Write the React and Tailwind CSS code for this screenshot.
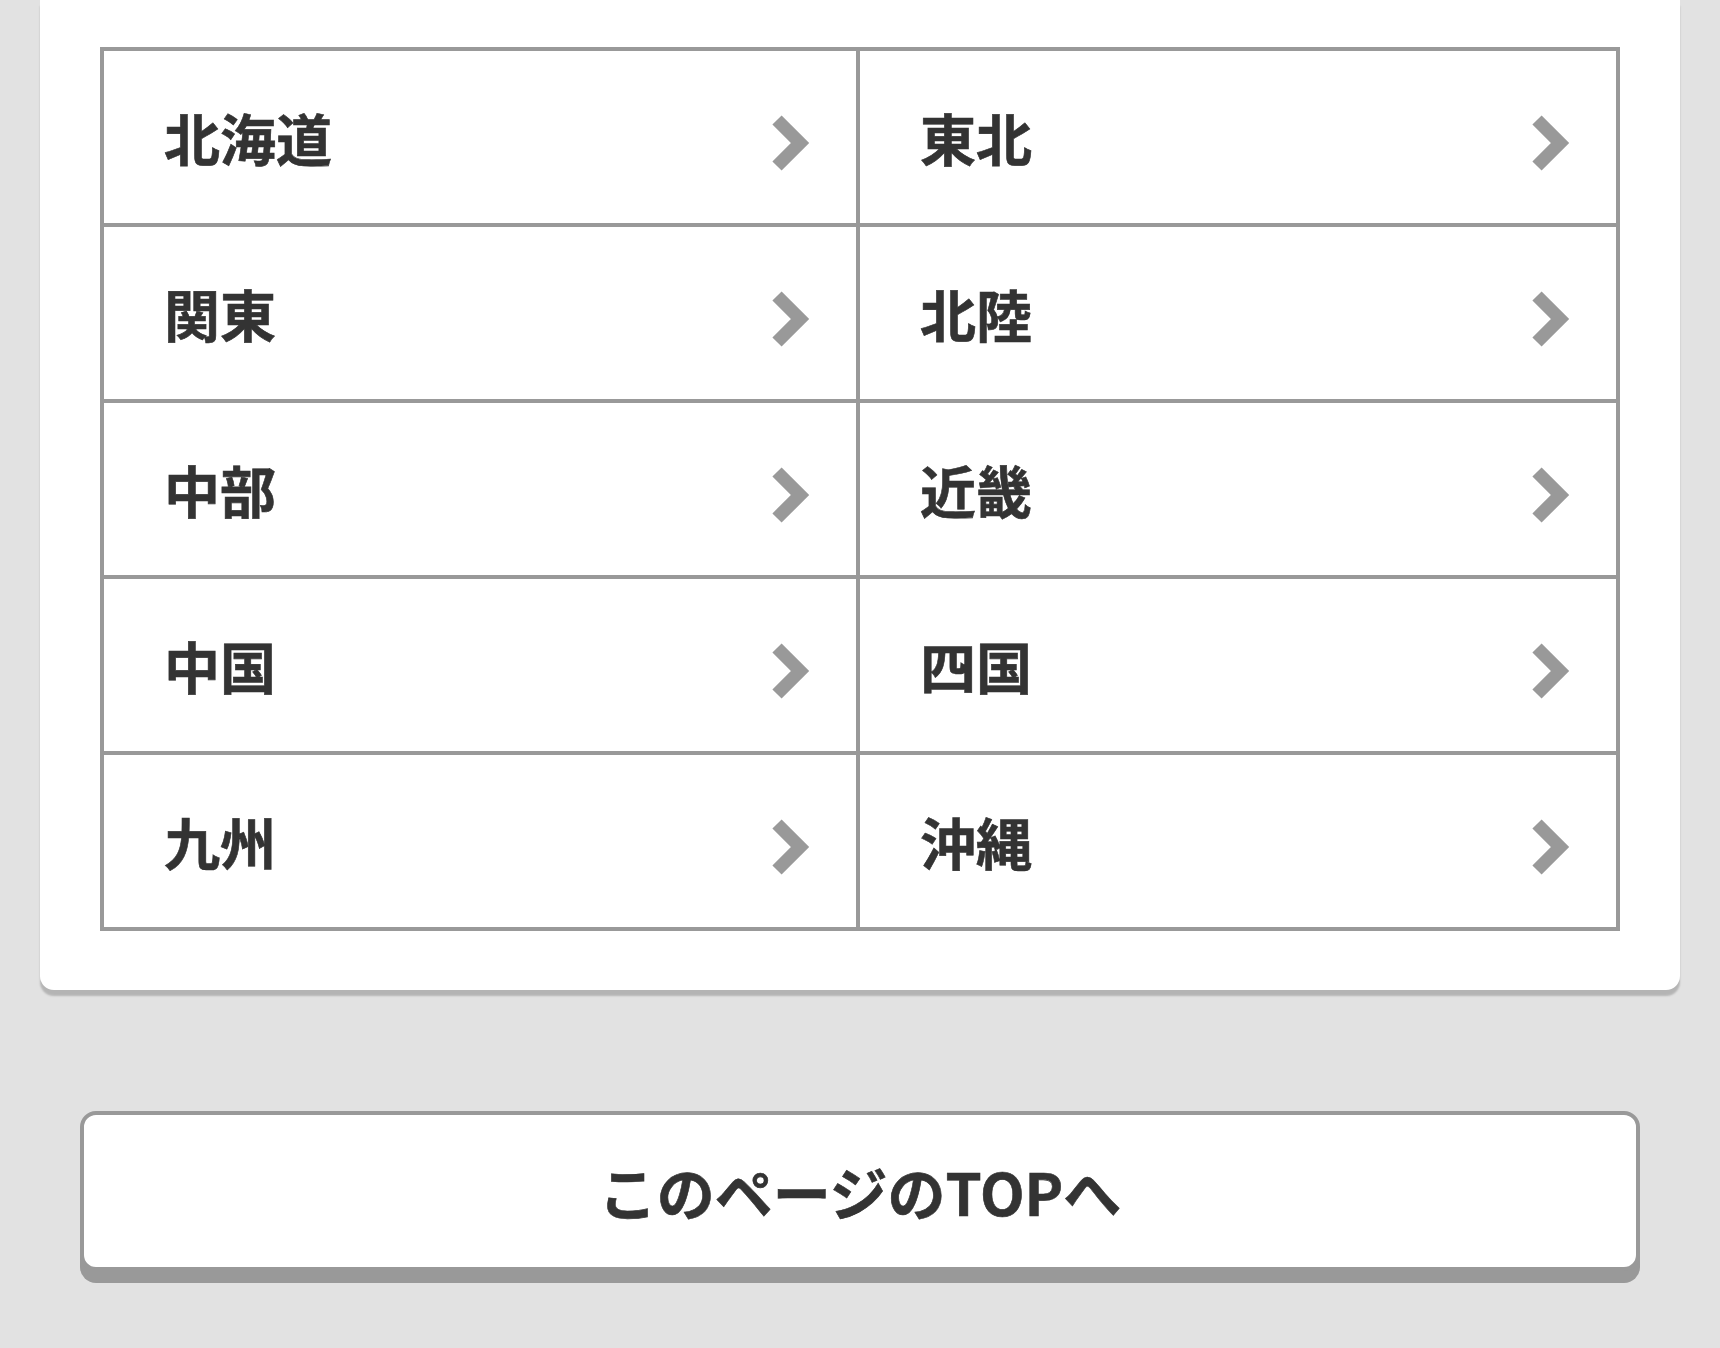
import React from "react";

const regions = [
  ["北海道", "東北"],
  ["関東", "北陸"],
  ["中部", "近畿"],
  ["中国", "四国"],
  ["九州", "沖縄"],
];

function Chevron() {
  return (
    <svg width="38" height="56" viewBox="0 0 38 56" className="mt-[11px] shrink-0">
      <polyline
        points="5,5 28,28 5,51"
        fill="none"
        stroke="#999999"
        strokeWidth="13"
        strokeLinejoin="miter"
        strokeLinecap="butt"
      />
    </svg>
  );
}

function Cell({ label }) {
  return (
    <a
      href="#"
      className="bg-white h-[172px] flex items-center justify-between pl-[60px] pr-[46px] no-underline"
    >
      <span className="text-[56px] font-bold text-[#333333] leading-none [-webkit-text-stroke:0.6px_#333333]">
        {label}
      </span>
      <Chevron />
    </a>
  );
}

export default function App() {
  return (
    <div
      className="w-full min-h-[1348px] bg-[#e2e2e2] overflow-hidden"
      style={{ fontFamily: '"Noto Sans CJK JP", "Noto Sans", sans-serif' }}
    >
      <div className="mx-[40px] bg-white rounded-b-[14px] shadow-[0_6px_2px_rgba(0,0,0,0.2)] pt-[47px] px-[60px] pb-[59px]">
        <div className="grid grid-cols-[752px_1fr] gap-[4px] bg-[#999999] p-[4px]">
          {regions.flat().map((r) => (
            <Cell key={r} label={r} />
          ))}
        </div>
      </div>
      <div className="mt-[121px] mx-[80px]">
        <a
          href="#"
          className="flex items-center justify-center h-[160px] bg-white border-4 border-[#999999] rounded-[16px] shadow-[0_12px_0_#999999] no-underline"
        >
          <span className="text-[58px] font-bold text-[#333333] leading-none [-webkit-text-stroke:0.6px_#333333]">
            このページのTOPへ
          </span>
        </a>
      </div>
    </div>
  );
}
